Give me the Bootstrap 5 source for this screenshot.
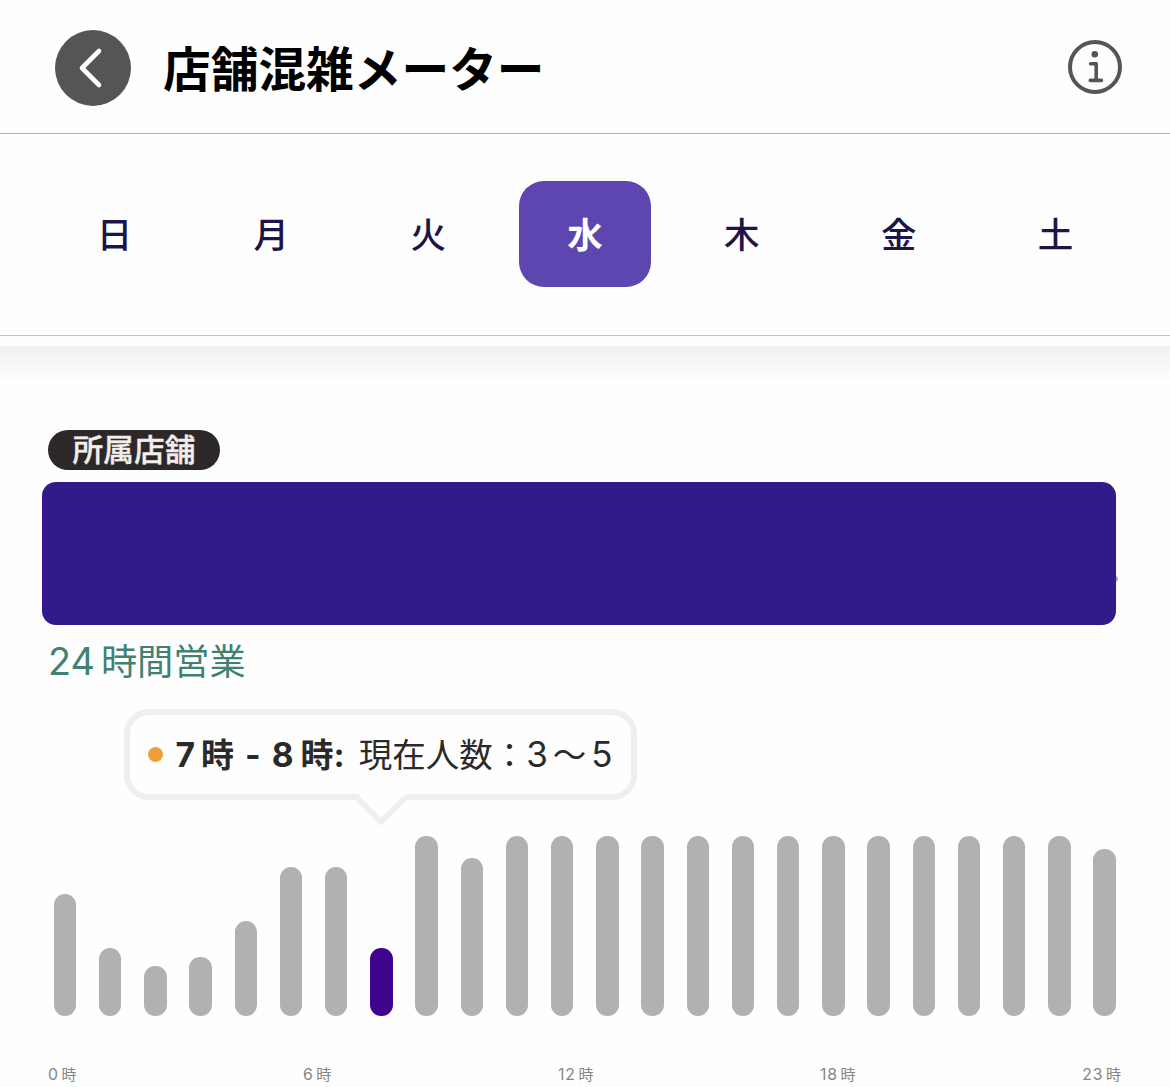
<!DOCTYPE html>
<html lang="ja">
<head>
<meta charset="utf-8">
<meta name="viewport" content="width=device-width, initial-scale=1">
<title>店舗混雑メーター</title>
<link href="https://cdn.jsdelivr.net/npm/bootstrap@5.3.0/dist/css/bootstrap.min.css" rel="stylesheet">
<style>
  body { font-family: Inter, "Noto Sans CJK JP", sans-serif; background: #fefefe; color: #2b2a29; overflow: hidden; height: 1087px; }
  .top-bar { height: 134px; padding: 2px 48px 0 55px; border-bottom: 1px solid #b1b1b1; }
  .back-btn { width: 76px; height: 76px; background: #555; }
  .page-title { font-size: 47.7px; line-height: 60px; font-weight: 700; color: #000; margin: 0 0 0 32px; padding-top: 4px; }
  .info-icon { margin-bottom: 2px; }
  .day-bar { height: 202px; padding: 0 36px 2px; border-bottom: 1px solid #bfc1c2; }
  .day-bar .nav-item .nav-link { width: 132px; height: 106px; border-radius: 25px; padding: 5px 0 0; font-size: 35.5px; line-height: 1; font-weight: 500; color: #1d1548; }
  .day-bar .nav-item .nav-link.active { background: #5d46b0; color: #fff; font-weight: 700; }
  .scroll-shade { margin-top: 10px; height: 36px; background: linear-gradient(#f0f0f0, #fefefe); }
  .store { padding: 48px 54px 0 42px; }
  .home-badge { width: 172px; height: 40px; margin-left: 6px; background: #2b2827; color: #f1eeec; font-size: 30.7px; font-weight: 500; line-height: 40px; -webkit-text-stroke: .4px #f1eeec; }
  .store-name { height: 143px; margin-top: 12px; border-radius: 14px; background: #331a8a; }
  .store-name::after { content: ""; position: absolute; right: -2px; top: 94px; width: 6px; height: 6px; border-radius: 50%; background: #a9a0d4; z-index: -1; }
  .open-hours { margin: 16px 0 0 6px; height: 40px; line-height: 40px; font-size: 36.2px; color: #3f8272; }
  .tip { width: 513px; height: 91px; margin: 28px 0 0 82px; border: 6px solid #efefef; border-radius: 25px; background: #fefefe; padding-left: 18px; font-size: 33.5px; line-height: 40px; white-space: nowrap; }
  .tip-dot { width: 15px; height: 15px; background: #f09f38; margin-right: 12.5px; }
  .tip-tail { left: 223px; top: 79px; }
  .tip-text b { font-size: 33px; }
  .tip-text b span { font-weight: 650; font-size: 33.5px; }
  .n7 { margin-right: 6px; }
  .dash { margin: 0 11px 0 11px; }
  .n8 { margin-right: 7px; }
  .colon { margin-right: 14px; }
  .lo, .hi { font-size: 35px; }
  .lo { margin-right: 5px; }
  .hi { margin-left: 5px; }
  .bars { height: 180px; margin: 36px -.2px 0 11.8px; }
  .bar { width: 22.4px; border-radius: 11.2px; background: #b0b1b1; }
  .bar-now { background: #3f038d; }
  .hours { margin: 49px -5px 0 6px; font-size: 15px; line-height: 20px; color: #858585; }
  .hours i, .open-hours i { font-style: normal; }
  .hours i { letter-spacing: .9px; margin-right: 2.6px; font-size: 15.8px; }
  .open-hours i { margin-right: 6px; font-size: 37.8px; }
</style>
<script src="https://cdn.jsdelivr.net/npm/bootstrap@5.3.0/dist/js/bootstrap.bundle.min.js"></script>
</head>
<body>
<header class="top-bar d-flex align-items-center">
  <a href="#" class="back-btn rounded-circle flex-shrink-0" aria-label="戻る">
    <svg class="d-block" width="76" height="76" viewBox="0 0 76 76" fill="none" stroke="#fff" stroke-width="4.6" stroke-linecap="round" stroke-linejoin="round"><path d="M44 21 27 38 44 55"/></svg>
  </a>
  <h1 class="page-title">店舗混雑メーター</h1>
  <svg class="info-icon ms-auto" width="54" height="54" viewBox="0 0 54 54" fill="none" stroke="#555" stroke-linecap="round" stroke-linejoin="round"><circle cx="27" cy="27" r="25" stroke-width="4"/><circle cx="26.8" cy="14.2" r="3.3" fill="#555" stroke="none"/><path d="M22.6 23.7H28.2V40.4M22.3 40.4H33.4" stroke-width="3.6"/></svg>
</header>
<nav class="day-bar nav nav-pills nav-justified align-items-center flex-nowrap">
  <div class="nav-item"><a href="#" class="nav-link d-flex align-items-center justify-content-center mx-auto">日</a></div>
  <div class="nav-item"><a href="#" class="nav-link d-flex align-items-center justify-content-center mx-auto">月</a></div>
  <div class="nav-item"><a href="#" class="nav-link d-flex align-items-center justify-content-center mx-auto">火</a></div>
  <div class="nav-item"><a href="#" class="nav-link active d-flex align-items-center justify-content-center mx-auto">水</a></div>
  <div class="nav-item"><a href="#" class="nav-link d-flex align-items-center justify-content-center mx-auto">木</a></div>
  <div class="nav-item"><a href="#" class="nav-link d-flex align-items-center justify-content-center mx-auto">金</a></div>
  <div class="nav-item"><a href="#" class="nav-link d-flex align-items-center justify-content-center mx-auto">土</a></div>
</nav>
<div class="scroll-shade"></div>
<main class="store">
  <div class="home-badge rounded-pill text-center">所属店舗</div>
  <div class="store-name position-relative"></div>
  <div class="open-hours"><i>24</i>時間営業</div>
  <div class="tip position-relative d-flex align-items-center">
    <span class="tip-dot rounded-circle flex-shrink-0"></span>
    <span class="tip-text"><b><span class="n7">7</span>時<span class="dash">-</span><span class="n8">8</span>時<span class="colon">:</span></b><span class="now">現在人数：</span><span class="lo">3</span>〜<span class="hi">5</span></span>
    <svg class="tip-tail position-absolute" width="58" height="32" viewBox="0 0 58 32"><path d="M5 0 H53 V0 L28 26Z" fill="#fefefe"/><path d="M3 3 28 28 53 3" fill="none" stroke="#efefef" stroke-width="5.5" stroke-linejoin="round"/></svg>
  </div>
  <div class="bars d-flex align-items-end justify-content-between">
    <div class="bar" style="height:122px"></div>
    <div class="bar" style="height:68px"></div>
    <div class="bar" style="height:50px"></div>
    <div class="bar" style="height:59px"></div>
    <div class="bar" style="height:95px"></div>
    <div class="bar" style="height:149px"></div>
    <div class="bar" style="height:149px"></div>
    <div class="bar bar-now" style="height:68px"></div>
    <div class="bar" style="height:180px"></div>
    <div class="bar" style="height:158px"></div>
    <div class="bar" style="height:180px"></div>
    <div class="bar" style="height:180px"></div>
    <div class="bar" style="height:180px"></div>
    <div class="bar" style="height:180px"></div>
    <div class="bar" style="height:180px"></div>
    <div class="bar" style="height:180px"></div>
    <div class="bar" style="height:180px"></div>
    <div class="bar" style="height:180px"></div>
    <div class="bar" style="height:180px"></div>
    <div class="bar" style="height:180px"></div>
    <div class="bar" style="height:180px"></div>
    <div class="bar" style="height:180px"></div>
    <div class="bar" style="height:180px"></div>
    <div class="bar" style="height:167px"></div>
  </div>
  <div class="hours d-flex justify-content-between">
    <span><i>0</i>時</span><span><i>6</i>時</span><span><i>12</i>時</span><span><i>18</i>時</span><span><i>23</i>時</span>
  </div>
</main>
</body>
</html>
